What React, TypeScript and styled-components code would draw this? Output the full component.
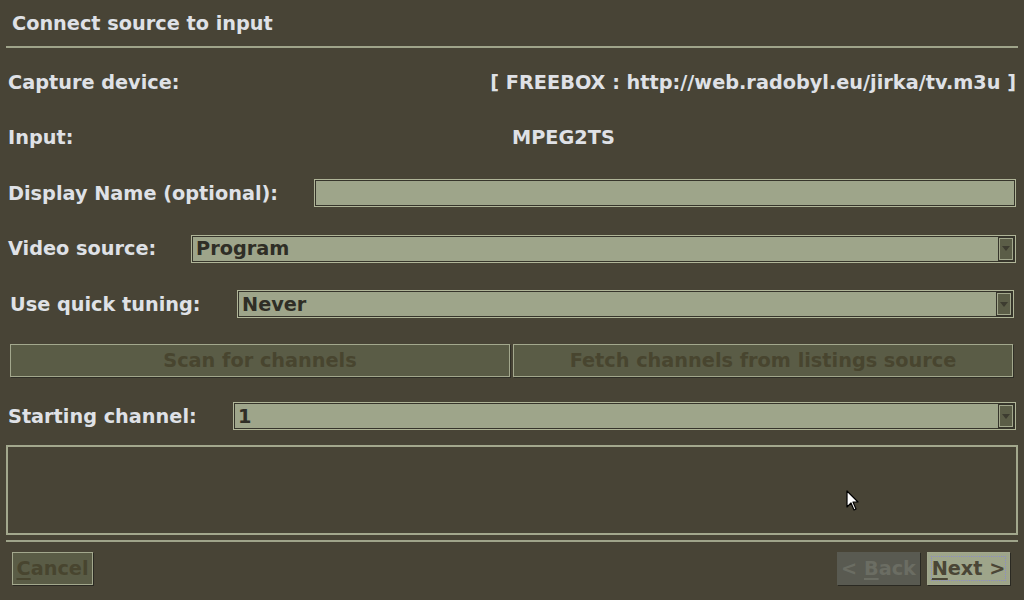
import React from 'react';
import styled, { createGlobalStyle } from 'styled-components';

const Global = createGlobalStyle`
  html, body {
    margin: 0;
    padding: 0;
    background: #484436;
  }
  body {
    font-family: "DejaVu Sans", "Liberation Sans", sans-serif;
    font-weight: bold;
    font-size: 19.3px;
  }
`;

const Screen = styled.div`
  position: relative;
  width: 1024px;
  height: 600px;
  overflow: hidden;
  background: #484436;
  color: #dfe1e6;
  box-sizing: border-box;
  padding: 0 6px;
  display: flex;
  flex-direction: column;
`;

const Title = styled.div`
  height: 46px;
  display: flex;
  align-items: center;
  padding-left: 6px;
`;

const Divider = styled.div`
  height: 2px;
  background: #9fa48a;
`;

const Form = styled.div`
  display: flex;
  flex-direction: column;
  gap: 27.5px;
  padding-top: 20px;
`;

const Row = styled.div<{ $pad?: number }>`
  height: 28px;
  display: flex;
  align-items: center;
  padding-left: ${p => p.$pad ?? 2}px;
`;

const Label = styled.div<{ $w?: number }>`
  flex: 0 0 ${p => (p.$w ? `${p.$w}px` : 'auto')};
  white-space: nowrap;
`;

const Value = styled.div<{ $right?: boolean }>`
  flex: 1;
  text-align: ${p => (p.$right ? 'right' : 'left')};
  padding-right: ${p => (p.$right ? 2 : 0)}px;
  white-space: nowrap;
`;

const Field = styled.div<{ $mr?: number }>`
  flex: 1;
  height: 28px;
  box-sizing: border-box;
  margin-right: ${p => p.$mr ?? 2}px;
  background: #9ea58a;
  border: 1px solid #b0b598;
  box-shadow: inset 0 0 0 1px #36352b;
  color: #2f2e26;
  display: flex;
  align-items: center;
  padding: 0 2px 0 4px;
`;

const FieldText = styled.span`
  flex: 1;
`;

const ArrowBox = styled.div`
  width: 14px;
  height: 22px;
  box-sizing: border-box;
  background: #5b5d47;
  border: 1px solid #a3a88d;
  box-shadow: 0 0 0 1px #36352b;
  display: flex;
  align-items: center;
  justify-content: center;
`;

const ButtonRow = styled.div`
  height: 33px;
  display: flex;
  gap: 3px;
  padding: 0 5px 0 4px;
  margin: -2px 0;
`;

const FlatButton = styled.div`
  flex: 1;
  box-sizing: border-box;
  background: #5a5c46;
  border: 1px solid #a3a88d;
  box-shadow: 1px 1px 0 #2f2e26;
  color: #48452f;
  display: flex;
  align-items: center;
  justify-content: center;
`;

const LogBox = styled.div`
  height: 90px;
  box-sizing: border-box;
  border: 2px solid #a3a88d;
  margin-top: 15px;
`;

const BottomDivider = styled(Divider)`
  margin-top: 5px;
`;

const Footer = styled.div`
  display: flex;
  align-items: center;
  padding: 10px 8px 0 6px;
  gap: 7px;
`;

const Spacer = styled.div`
  flex: 1;
`;

const DialogButton = styled.div<{ $kind: 'disabled' | 'grey' | 'default' }>`
  height: 33px;
  width: ${p => (p.$kind === 'disabled' ? 81 : 83)}px;
  box-sizing: border-box;
  display: flex;
  align-items: center;
  justify-content: center;
  position: relative;
  background: ${p =>
    p.$kind === 'default' ? '#9ea58a' : p.$kind === 'grey' ? '#595a51' : '#5a5c46'};
  color: ${p =>
    p.$kind === 'default' ? '#4a4636' : p.$kind === 'grey' ? '#6b6d63' : '#48452f'};
  border: 1px solid ${p => (p.$kind === 'grey' ? '#595a51' : '#a3a88d')};
  box-shadow: 1px 1px 0 #2a2922;
  u {
    text-decoration-thickness: 2px;
    text-underline-offset: 3px;
  }
`;

const FocusRing = styled.div`
  position: absolute;
  inset: 3px;
  border: 1px dotted #8b8bc6;
  pointer-events: none;
`;

const Cursor = styled.svg`
  position: absolute;
  left: 846px;
  top: 490px;
`;

function Combo({ text, mr }: { text: string; mr?: number }) {
  return (
    <Field $mr={mr}>
      <FieldText>{text}</FieldText>
      <ArrowBox>
        <svg width="8" height="5" viewBox="0 0 8 5">
          <path d="M0 0 H8 L4 5 Z" fill="#3d3c30" />
        </svg>
      </ArrowBox>
    </Field>
  );
}

export default function App() {
  return (
    <>
      <Global />
      <Screen>
        <Title>Connect source to input</Title>
        <Divider />
        <Form>
          <Row>
            <Label>Capture device:</Label>
            <Value $right>[ FREEBOX : http://web.radobyl.eu/jirka/tv.m3u ]</Value>
          </Row>
          <Row>
            <Label $w={504}>Input:</Label>
            <Value>MPEG2TS</Value>
          </Row>
          <Row>
            <Label $w={306}>Display Name (optional):</Label>
            <Field />
          </Row>
          <Row>
            <Label $w={183}>Video source:</Label>
            <Combo text="Program" />
          </Row>
          <Row $pad={4}>
            <Label $w={227}>Use quick tuning:</Label>
            <Combo text="Never" mr={4} />
          </Row>
          <ButtonRow>
            <FlatButton>Scan for channels</FlatButton>
            <FlatButton>Fetch channels from listings source</FlatButton>
          </ButtonRow>
          <Row>
            <Label $w={225}>Starting channel:</Label>
            <Combo text="1" />
          </Row>
        </Form>
        <LogBox />
        <BottomDivider />
        <Footer>
          <DialogButton $kind="disabled">
            <span><u>C</u>ancel</span>
          </DialogButton>
          <Spacer />
          <DialogButton $kind="grey">
            <span>&lt; <u>B</u>ack</span>
          </DialogButton>
          <DialogButton $kind="default">
            <span><u>N</u>ext &gt;</span>
            <FocusRing />
          </DialogButton>
        </Footer>
        <Cursor width="14" height="22" viewBox="0 0 14 22">
          <path d="M1 1 L1 17 L5 13 L8 20 L10 19 L7 12 L12 12 Z" fill="#fff" stroke="#000" strokeWidth="1.2" strokeLinejoin="round" />
        </Cursor>
      </Screen>
    </>
  );
}
